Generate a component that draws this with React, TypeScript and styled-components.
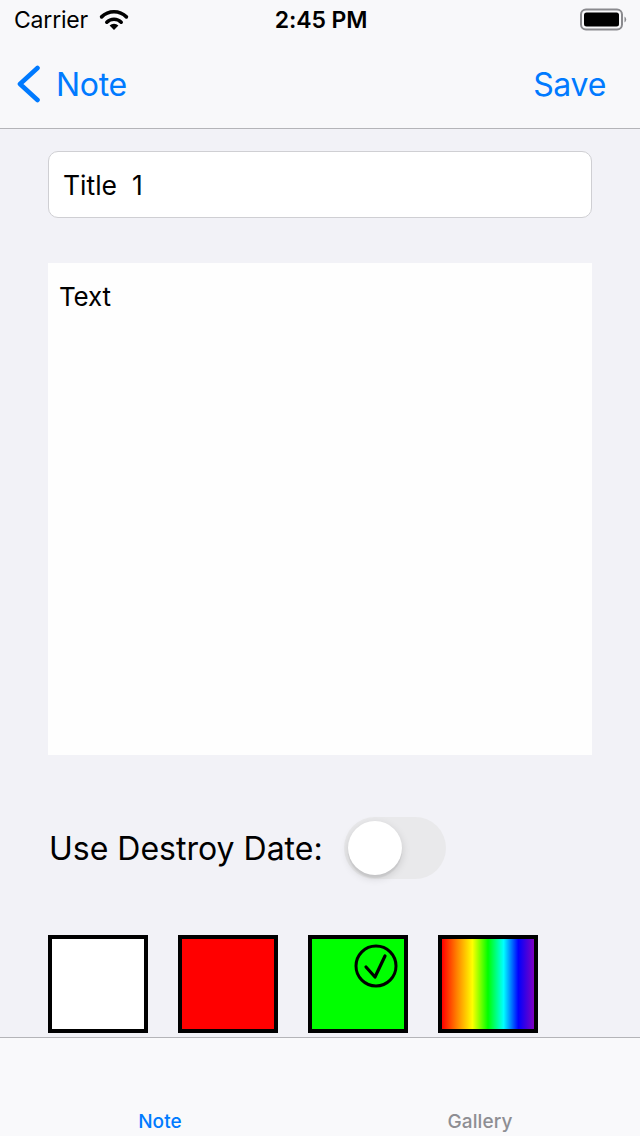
import React from "react";
import styled, { createGlobalStyle } from "styled-components";

const Global = createGlobalStyle`
  html, body { margin: 0; padding: 0; }
  body {
    background: #f2f2f7;
    font-family: Inter, "Noto Sans", "Liberation Sans", sans-serif;
    color: #000;
    -webkit-font-smoothing: antialiased;
  }
  * { box-sizing: border-box; }
`;

const Page = styled.div`
  width: 640px;
  height: 1136px;
  display: flex;
  flex-direction: column;
  overflow: hidden;
  background: #f2f2f7;
`;

const Header = styled.header`
  background: #f8f8fa;
  border-bottom: 1px solid #b4b4b8;
  flex: none;
`;

const StatusBar = styled.div`
  height: 40px;
  display: grid;
  grid-template-columns: 1fr auto 1fr;
  align-items: center;
  padding: 0 12px 0 14px;
`;

const StatusLeft = styled.div`
  display: flex;
  align-items: center;
  gap: 11px;
  font-size: 23px;
  font-weight: 400;
  letter-spacing: -0.2px;
`;

const Clock = styled.div`
  font-size: 23px;
  font-weight: 600;
  letter-spacing: -0.1px;
`;

const StatusRight = styled.div`
  display: flex;
  justify-content: flex-end;
  align-items: center;
`;

const NavBar = styled.div`
  height: 88px;
  display: flex;
  align-items: center;
  justify-content: space-between;
  padding: 0 34px 0 16px;
`;

const NavButton = styled.button`
  display: flex;
  align-items: center;
  gap: 14px;
  background: none;
  border: none;
  padding: 0;
  font-family: inherit;
  font-size: 32px;
  font-weight: 400;
  color: #007aff;
  letter-spacing: -0.3px;
`;

const Content = styled.main`
  flex: 1;
  min-height: 0;
  overflow: hidden;
  padding: 22px 48px 0;
  display: flex;
  flex-direction: column;
`;

const TitleField = styled.div`
  height: 67px;
  background: #fff;
  border: 1px solid #cfcfd3;
  border-radius: 10px;
  display: flex;
  align-items: center;
  padding: 0 14px;
  font-size: 26.5px;
  letter-spacing: 0;
  white-space: pre;
`;

const TextArea = styled.div`
  margin-top: 45px;
  height: 492px;
  background: #fefefe;
  padding: 18px 11px;
  font-size: 26px;
  letter-spacing: -0.2px;
  flex: none;
`;

const ToggleRow = styled.div`
  margin-top: 62px;
  height: 62px;
  display: flex;
  align-items: center;
  gap: 21px;
  padding-left: 1px;
  flex: none;
`;

const Label = styled.span`
  font-size: 32px;
  letter-spacing: 0;
`;

const Track = styled.div<{ $on: boolean }>`
  position: relative;
  width: 102px;
  height: 62px;
  border-radius: 31px;
  background: ${(p) => (p.$on ? "#34c759" : "#e9e9eb")};
`;

const Knob = styled.div<{ $on: boolean }>`
  position: absolute;
  top: 4px;
  left: ${(p) => (p.$on ? "44px" : "4px")};
  width: 54px;
  height: 54px;
  border-radius: 50%;
  background: #fff;
  box-shadow: 0 3px 8px rgba(0, 0, 0, 0.15), 0 3px 1px rgba(0, 0, 0, 0.06);
`;

const Swatches = styled.div`
  margin-top: 56px;
  display: flex;
  gap: 30px;
  flex: none;
`;

const Swatch = styled.div<{ $bg: string }>`
  position: relative;
  width: 100px;
  height: 98px;
  border: 4px solid #000;
  background: ${(p) => p.$bg};
`;

const CheckBadge = styled.div`
  position: absolute;
  top: 4px;
  right: 5px;
  line-height: 0;
`;

const TabBar = styled.nav`
  flex: none;
  height: 99px;
  border-top: 1px solid #b4b4b8;
  background: #f9f9fb;
  display: grid;
  grid-template-columns: 1fr 1fr;
`;

const TabItem = styled.div<{ $active: boolean }>`
  display: flex;
  align-items: flex-end;
  justify-content: center;
  padding-bottom: 3px;
  font-size: 19px;
  font-weight: 500;
  letter-spacing: 0.1px;
  color: ${(p) => (p.$active ? "#007aff" : "#8e8e93")};
`;

const Wifi = () => (
  <svg width="30" height="22" viewBox="0 0 30 22">
    <path d="M15 21 L10.6 16.6 A6.2 6.2 0 0 1 19.4 16.6 Z" fill="#000" />
    <path d="M7.8 13.2 A10.2 10.2 0 0 1 22.2 13.2" stroke="#000" strokeWidth="3.6" fill="none" strokeLinecap="round" />
    <path d="M2.6 7.9 A17.6 17.6 0 0 1 27.4 7.9" stroke="#000" strokeWidth="3.6" fill="none" strokeLinecap="round" />
  </svg>
);

const Battery = () => (
  <svg width="48" height="24" viewBox="0 0 48 24">
    <rect x="1" y="1.5" width="41" height="20" rx="5" fill="none" stroke="#8a8a8e" strokeWidth="2" />
    <rect x="4" y="4.5" width="35" height="14" rx="2.5" fill="#000" />
    <path d="M44.5 8.5 A3.5 3.5 0 0 1 44.5 14.5 Z" fill="#8a8a8e" />
  </svg>
);

const Chevron = () => (
  <svg width="26" height="38" viewBox="0 0 26 38">
    <path d="M21.5 3 L4 19 L21.5 35" stroke="#007aff" strokeWidth="4.6" fill="none" strokeLinecap="round" strokeLinejoin="round" />
  </svg>
);

const CheckCircle = () => (
  <svg width="46" height="46" viewBox="0 0 46 46">
    <circle cx="23" cy="23" r="20" stroke="#000" strokeWidth="3" fill="none" />
    <path d="M13 24 L22 34 L32 13" stroke="#000" strokeWidth="3.2" fill="none" strokeLinecap="round" strokeLinejoin="round" />
  </svg>
);

const swatches = [
  { bg: "#ffffff", checked: false },
  { bg: "#ff0000", checked: false },
  { bg: "#00ff00", checked: true },
  {
    bg: "linear-gradient(to right, #ff0000 0%, #ff8000 16%, #ffff00 33%, #00ff00 50%, #00ffff 67%, #0000ff 83%, #7f00bf 100%)",
    checked: false,
  },
];

export default function App() {
  return (
    <>
      <Global />
      <Page>
        <Header>
          <StatusBar>
            <StatusLeft>
              Carrier
              <Wifi />
            </StatusLeft>
            <Clock>2:45 PM</Clock>
            <StatusRight>
              <Battery />
            </StatusRight>
          </StatusBar>
          <NavBar>
            <NavButton>
              <Chevron />
              Note
            </NavButton>
            <NavButton>Save</NavButton>
          </NavBar>
        </Header>
        <Content>
          <TitleField>{"Title  1"}</TitleField>
          <TextArea>Text</TextArea>
          <ToggleRow>
            <Label>Use Destroy Date:</Label>
            <Track $on={false}>
              <Knob $on={false} />
            </Track>
          </ToggleRow>
          <Swatches>
            {swatches.map((s, i) => (
              <Swatch key={i} $bg={s.bg}>
                {s.checked && (
                  <CheckBadge>
                    <CheckCircle />
                  </CheckBadge>
                )}
              </Swatch>
            ))}
          </Swatches>
        </Content>
        <TabBar>
          <TabItem $active>Note</TabItem>
          <TabItem $active={false}>Gallery</TabItem>
        </TabBar>
      </Page>
    </>
  );
}
